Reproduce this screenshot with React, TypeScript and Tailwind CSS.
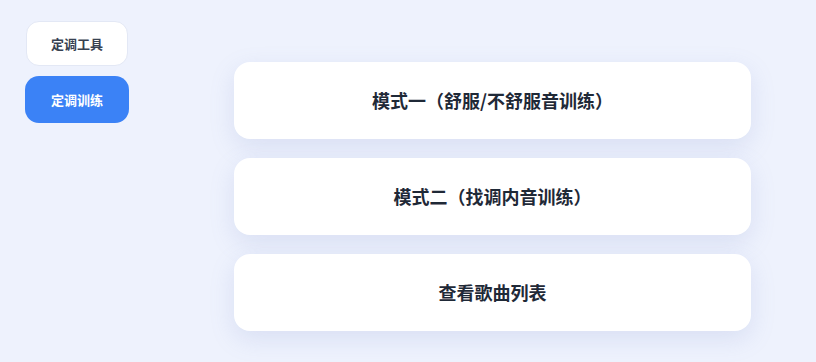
import { useState } from "react";

const modes = [
  "模式一（舒服/不舒服音训练）",
  "模式二（找调内音训练）",
  "查看歌曲列表",
];

export default function App() {
  const [tab, setTab] = useState<"tool" | "train">("train");

  return (
    <div
      className="flex min-h-[362px] w-full bg-[#eef2fd] text-[#1f2937]"
      style={{ fontFamily: '"Noto Sans CJK SC", "Noto Sans", sans-serif' }}
    >
      {/* Sidebar */}
      <div className="flex w-[169px] shrink-0 flex-col items-start gap-[10px] pl-[25px] pt-[21px]">
        <button
          onClick={() => setTab("tool")}
          className={
            tab === "tool"
              ? "flex h-[47px] w-[104px] items-center justify-center rounded-[14px] bg-[#3b82f6] text-[13px] font-bold text-white"
              : "ml-[1px] flex h-[45px] w-[102px] items-center justify-center rounded-[13px] border border-[#e3e8f5] bg-white text-[13px] font-bold text-[#374151]"
          }
        >
          定调工具
        </button>
        <button
          onClick={() => setTab("train")}
          className={
            tab === "train"
              ? "flex h-[47px] w-[104px] items-center justify-center rounded-[14px] bg-[#3b82f6] text-[13px] font-bold text-white"
              : "ml-[1px] flex h-[45px] w-[102px] items-center justify-center rounded-[13px] border border-[#e3e8f5] bg-white text-[13px] font-bold text-[#374151]"
          }
        >
          定调训练
        </button>
      </div>

      {/* Main */}
      <div className="flex flex-1 flex-col items-center gap-[19px] pt-[62px]">
        {modes.map((m) => (
          <button
            key={m}
            className="flex h-[77px] w-[517px] items-center justify-center rounded-[16px] bg-white text-[18px] font-bold text-[#1f2937] shadow-[0_8px_24px_rgba(120,140,200,0.18)]"
          >
            {m}
          </button>
        ))}
      </div>
    </div>
  );
}
